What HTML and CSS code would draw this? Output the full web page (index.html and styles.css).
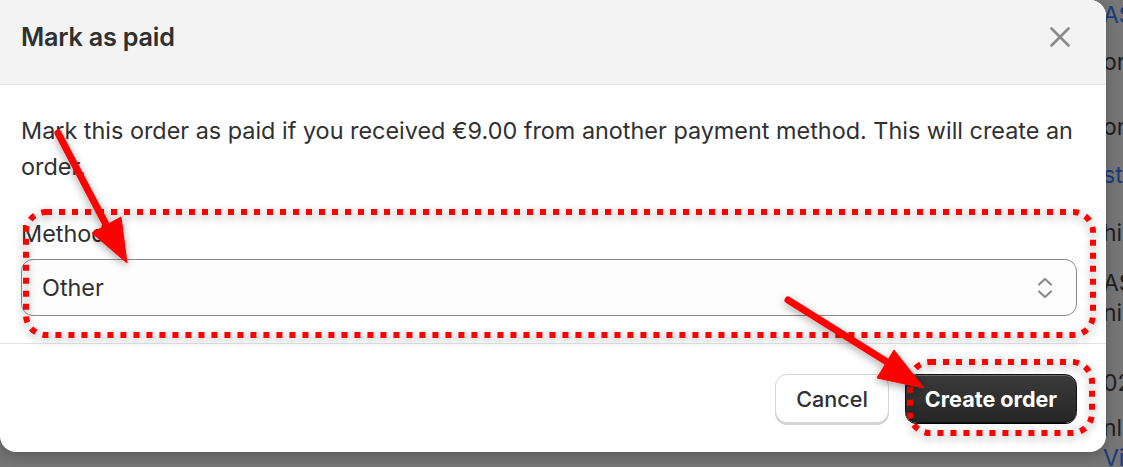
FILE: index.html
```html
<!DOCTYPE html>
<html lang="en">
<head>
<meta charset="utf-8">
<title>Mark as paid</title>
<link rel="stylesheet" href="styles.css">
</head>
<body>
<div class="page">
  <div class="modal">
    <header class="modal-header">
      <h2 class="modal-title">Mark as paid</h2>
      <button class="close-btn" aria-label="Close">
        <svg width="20" height="20" viewBox="0 0 20 20"><path d="M1.5 1.5 L18.5 18.5 M18.5 1.5 L1.5 18.5" stroke="#8a8a8a" stroke-width="2.6" stroke-linecap="round" fill="none"/></svg>
      </button>
    </header>
    <div class="modal-body">
      <p class="desc">Mark this order as paid if you received €9.00 from another payment method. This will create an order.</p>
      <label class="field-label">Method</label>
      <div class="select">
        <span>Other</span>
        <svg width="16" height="22" viewBox="0 0 16 22"><path d="M2 7.5 L8 2 L14 7.5 M2 14.5 L8 20 L14 14.5" stroke="#8a8a8a" stroke-width="2.2" stroke-linecap="round" stroke-linejoin="round" fill="none"/></svg>
      </div>
    </div>
    <footer class="modal-footer">
      <button class="btn btn-secondary">Cancel</button>
      <button class="btn btn-primary">Create order</button>
    </footer>
  </div>
  <div class="bg-col">
    <div class="bl link">AS</div>
    <div class="bl">or</div>
    <div class="bl">on</div>
    <div class="bl link">st</div>
    <div class="bl">hip</div>
    <div class="bl">AS</div>
    <div class="bl">nik</div>
    <div class="bl">02</div>
    <div class="bl">nl</div>
    <div class="bl link">View</div>
  </div>
  <svg class="annotations" width="1123" height="467" viewBox="0 0 1123 467">
    <defs>
      <filter id="sh" x="-20%" y="-20%" width="140%" height="140%">
        <feDropShadow dx="0" dy="3" stdDeviation="4" flood-color="#000" flood-opacity="0.35"/>
      </filter>
    </defs>
    <g filter="url(#sh)" fill="none" stroke="#ff0000" stroke-width="6" stroke-dasharray="6 7">
      <rect x="26" y="212" width="1067" height="123" rx="20"/>
      <rect x="910" y="362" width="182" height="71" rx="20"/>
    </g>
    <g filter="url(#sh)" fill="#ff0000" stroke="#ff0000">
      <line x1="58" y1="133" x2="112" y2="236" stroke-width="7" stroke-linecap="round"/>
      <polygon points="127,263 92,233 121,217" stroke-width="1" stroke-linejoin="round"/>
      <line x1="788" y1="300" x2="895" y2="367" stroke-width="7" stroke-linecap="round"/>
      <polygon points="924,388 877,378 894,350" stroke-width="1" stroke-linejoin="round"/>
    </g>
  </svg>
</div>
</body>
</html>
```

FILE: styles.css
```css
* { box-sizing: border-box; }
html, body { margin: 0; padding: 0; }
body {
  width: 1123px;
  height: 467px;
  overflow: hidden;
  background: #767676;
  font-family: Inter, "Noto Sans", sans-serif;
  color: #303030;
}
.page {
  position: relative;
  display: flex;
  width: 1123px;
  height: 467px;
  overflow: hidden;
}
.modal {
  position: relative;
  z-index: 2;
  flex: 0 0 1106px;
  height: 452px;
  background: #ffffff;
  border-radius: 0 16px 16px 16px;
  box-shadow: 0 4px 14px rgba(0,0,0,0.25);
  display: flex;
  flex-direction: column;
  overflow: hidden;
}
.modal-header {
  height: 85px;
  background: #f3f3f3;
  border-bottom: 1px solid #e3e3e3;
  display: flex;
  align-items: center;
  justify-content: space-between;
  padding: 0 36px 10px 21px;
}
.modal-title {
  margin: 0;
  font-size: 25.2px;
  font-weight: 600;
  letter-spacing: -0.2px;
  color: #303030;
}
.close-btn {
  border: 0;
  background: transparent;
  padding: 0;
  width: 20px;
  height: 20px;
  display: flex;
}
.modal-body {
  padding: 28px 29px 27px 21px;
  border-bottom: 1px solid #e3e3e3;
  display: flex;
  flex-direction: column;
}
.desc {
  margin: 0;
  font-size: 23.4px;
  line-height: 36px;
}
.field-label {
  margin-top: 31px;
  font-size: 23.4px;
  line-height: 36px;
}
.select {
  margin-top: 7px;
  height: 57px;
  border: 1px solid #8a8a8a;
  border-radius: 12px;
  background: #fdfdfd;
  display: flex;
  align-items: center;
  justify-content: space-between;
  padding: 0 23px 0 20px;
  font-size: 23.4px;
}
.modal-footer {
  flex: 1;
  display: flex;
  justify-content: flex-end;
  align-items: flex-start;
  gap: 16px;
  padding: 30px 29px 0 0;
}
.btn {
  height: 49px;
  font-family: Inter, "Noto Sans", sans-serif;
  font-size: 21.6px;
  font-weight: 550;
  border-radius: 12px;
  padding: 0;
}
.btn-secondary {
  width: 114px;
  background: #ffffff;
  color: #303030;
  border: 1px solid #d6d6d6;
  box-shadow: 0 2px 0 #d4d4d4;
}
.btn-primary {
  width: 172px;
  background: linear-gradient(#3a3a3a, #262626);
  color: #ffffff;
  border: 1px solid #111;
  box-shadow: inset 0 1px 0 rgba(255,255,255,0.25), 0 1px 0 #000;
  font-weight: 650;
}
.bg-col {
  position: relative;
  z-index: 1;
  flex: 1;
  margin-left: -3px;
  font-family: Inter, "Noto Sans", sans-serif;
  font-size: 23px;
  color: #1e1e1e;
  white-space: nowrap;
  overflow: hidden;
}
.bl { height: 30px; line-height: 30px; }
.bl.link { color: #183b80; }
.bl:nth-child(2) { margin-top: 17px; }
.bl:nth-child(3) { margin-top: 35px; }
.bl:nth-child(4) { margin-top: 18px; }
.bl:nth-child(5) { margin-top: 28px; }
.bl:nth-child(6) { margin-top: 20px; }
.bl:nth-child(8) { margin-top: 40px; }
.bl:nth-child(9) { margin-top: 15px; }
.annotations {
  position: absolute;
  left: 0;
  top: 0;
  z-index: 5;
  pointer-events: none;
}
```
